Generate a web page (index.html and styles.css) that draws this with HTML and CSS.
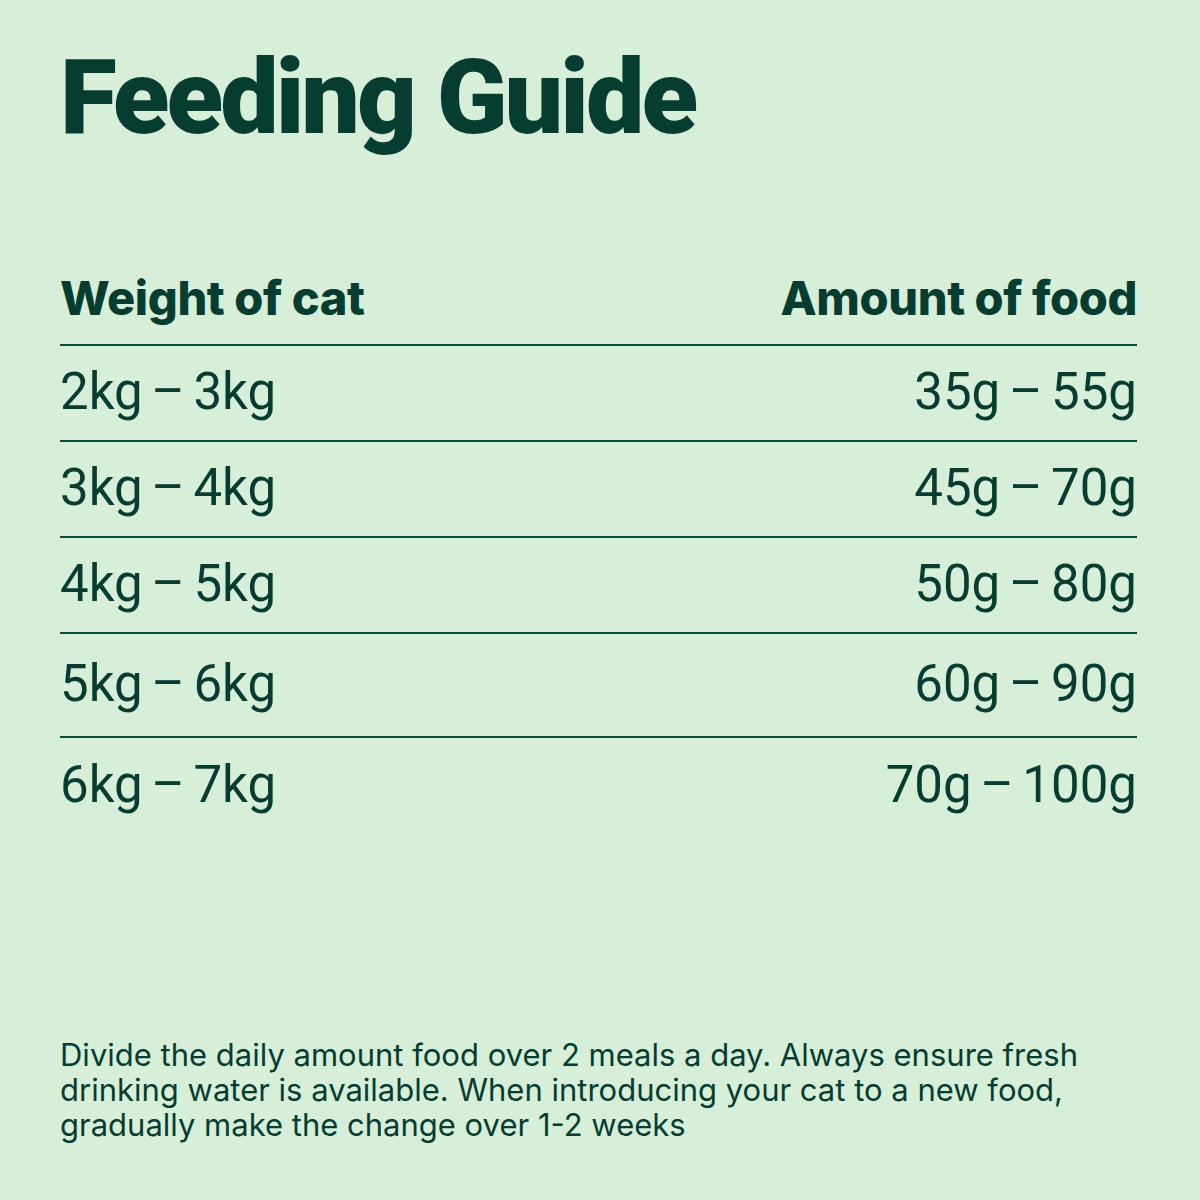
FILE: index.html
```html
<!DOCTYPE html>
<html lang="en">
<head>
<meta charset="utf-8">
<title>Feeding Guide</title>
<link rel="stylesheet" href="styles.css">
</head>
<body>
<main class="page">
  <h1 class="title">Feeding Guide</h1>
  <div class="table">
    <div class="row head">
      <span class="cell">Weight of cat</span>
      <span class="cell right">Amount of food</span>
    </div>
    <div class="row">
      <span class="cell">2kg – 3kg</span>
      <span class="cell right">35g – 55g</span>
    </div>
    <div class="row">
      <span class="cell">3kg – 4kg</span>
      <span class="cell right">45g – 70g</span>
    </div>
    <div class="row">
      <span class="cell">4kg – 5kg</span>
      <span class="cell right">50g – 80g</span>
    </div>
    <div class="row tall">
      <span class="cell">5kg – 6kg</span>
      <span class="cell right">60g – 90g</span>
    </div>
    <div class="row last">
      <span class="cell">6kg – 7kg</span>
      <span class="cell right">70g – 100g</span>
    </div>
  </div>
  <p class="note">Divide the daily amount food over 2 meals a day. Always ensure fresh drinking water is available. When introducing your cat to a new food, gradually make the change over 1-2 weeks</p>
</main>
</body>
</html>
```
FILE: styles.css
```css
html, body {
  margin: 0;
  padding: 0;
  background: #d7efd9;
}
.page {
  box-sizing: border-box;
  width: 1200px;
  height: 1200px;
  padding: 46px 63px 0 60px;
  display: flex;
  flex-direction: column;
  color: #063d30;
  font-family: Roboto, "Liberation Sans", sans-serif;
}
.title {
  margin: 0;
  font-family: Roboto, Inter, sans-serif;
  font-weight: 900;
  font-size: 104px;
  line-height: 1;
  letter-spacing: -3px;
}
.table {
  margin-top: 124px;
  display: flex;
  flex-direction: column;
}
.row {
  display: flex;
  justify-content: space-between;
  align-items: center;
  height: 96px;
  padding-bottom: 4px;
  border-bottom: 2px solid #0d4a3a;
  box-sizing: border-box;
  font-size: 51px;
  line-height: 1;
  word-spacing: -4px;
}
.row.head {
  height: 72px;
  padding-bottom: 0;
  align-items: flex-start;
  font-family: Inter, Roboto, sans-serif;
  font-weight: 800;
  font-size: 47px;
  letter-spacing: -0.4px;
  word-spacing: 0;
}
.row.tall {
  height: 104px;
}
.row.last {
  border-bottom: none;
}
.note {
  margin: auto 0 58px;
  font-family: Inter, Roboto, sans-serif;
  font-size: 31px;
  line-height: 35px;
  letter-spacing: 0;
  max-width: 1060px;
}
```
